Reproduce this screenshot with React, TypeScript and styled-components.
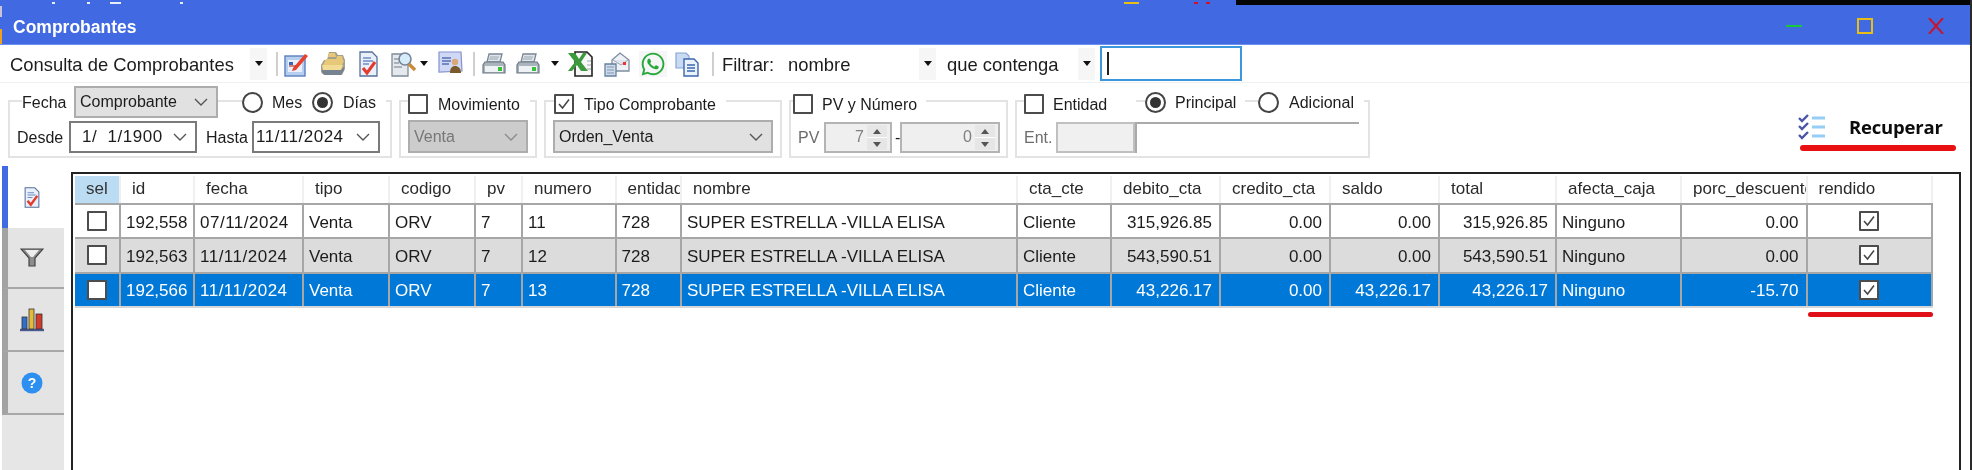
import React from 'react';
import styled, { createGlobalStyle } from 'styled-components';
import { FaWhatsapp } from 'react-icons/fa';

const GlobalStyle = createGlobalStyle`
  html, body { margin: 0; padding: 0; background: #fff; }
  body { width: 1972px; height: 470px; overflow: hidden; font-family: "Liberation Sans", Arial, sans-serif; color: #1c1c1c; }
  * { box-sizing: border-box; }
`;

const Window = styled.div`
  width: 1972px;
  height: 470px;
  display: flex;
  flex-direction: column;
  border-right: 2px solid #2a2a2a;
  background: #fff;
  overflow: hidden;
  filter: blur(0.5px);
`;

/* title bar */
const TitleBar = styled.header`
  position: relative;
  flex: none;
  height: 45px;
  margin-right: -2px;
  padding: 8px 28px 0 13px;
  display: flex;
  align-items: center;
  background: #4169e1;
  border-bottom: 1px solid #6e90ee;
`;
const Title = styled.span`
  flex: 1;
  margin-top: 2px;
  color: #fff;
  font-size: 17.5px;
  font-weight: 700;
`;
const WinButtons = styled.div`
  display: flex;
  align-items: center;
  gap: 55px;
`;
const BackdropStrip = styled.i`
  position: absolute;
  left: 1236px;
  right: 0;
  top: 0;
  height: 5px;
  background: #050505;
`;
const Speck = styled.i<{ $x: number; $w: number; $c: string }>`
  position: absolute;
  left: ${(p) => p.$x}px;
  top: 2px;
  width: ${(p) => p.$w}px;
  height: 2px;
  background: ${(p) => p.$c};
`;
const EdgeBits = styled.i`
  position: absolute;
  left: 0;
  top: 6px;
  width: 2px;
  height: 38px;
  background: linear-gradient(#c9c3da 0 30%, #4169e1 30% 60%, #f0a020 60% 100%);
`;

/* toolbar */
const Toolbar = styled.div`
  flex: none;
  height: 38px;
  display: flex;
  align-items: center;
  border-bottom: 1px solid #f0f0f0;
`;
const ToolText = styled.span<{ $ml: number; $w?: number }>`
  flex: none;
  margin-left: ${(p) => p.$ml}px;
  padding-top: 2px;
  width: ${(p) => (p.$w ? `${p.$w}px` : 'auto')};
  font-size: 18.4px;
  white-space: nowrap;
`;
const CaretBox = styled.span<{ $ml: number }>`
  flex: none;
  margin-left: ${(p) => p.$ml}px;
  width: 17px;
  height: 32px;
  background: #f6f6f6;
  display: flex;
  align-items: center;
  justify-content: center;
  &::after {
    content: '';
    border-left: 4px solid transparent;
    border-right: 4px solid transparent;
    border-top: 5px solid #111;
  }
`;
const SmallCaret = styled.span<{ $ml: number }>`
  flex: none;
  margin-left: ${(p) => p.$ml}px;
  border-left: 4px solid transparent;
  border-right: 4px solid transparent;
  border-top: 5px solid #111;
`;
const ToolSep = styled.span<{ $ml: number }>`
  flex: none;
  margin-left: ${(p) => p.$ml}px;
  width: 2px;
  height: 24px;
  background: #cfcfcf;
`;
const ToolIcon = styled.span<{ $ml: number; $w: number; $bg?: string }>`
  flex: none;
  margin-left: ${(p) => p.$ml}px;
  width: ${(p) => p.$w}px;
  height: 26px;
  display: flex;
  align-items: center;
  justify-content: center;
  background: ${(p) => p.$bg || 'transparent'};
  svg { display: block; width: 100%; height: 100%; }
`;
const SearchBox = styled.input`
  flex: none;
  margin-left: 5px;
  width: 142px;
  height: 35px;
  margin-top: -1px;
  border: 2px solid #3a96dd;
  background: #fff;
  outline: none;
  padding: 0 0 0 2px;
`;
const TextCaret = styled.span`
  position: relative;
  flex: none;
  width: 2px;
  height: 23px;
  margin-left: -135px;
  margin-right: 133px;
  background: #222;
`;

/* filter row */
const FilterRow = styled.section`
  flex: none;
  height: 83px;
  padding: 17px 14px 0 8px;
  display: flex;
  align-items: flex-start;
  gap: 7px;
`;
const Group = styled.div<{ $w: number }>`
  position: relative;
  flex: none;
  width: ${(p) => p.$w}px;
  height: 58px;
  padding: 0 7px 3px;
  display: flex;
  align-items: flex-end;
  border: 2px solid #e3e3e3;
`;
const Legend = styled.div<{ $ml: number }>`
  position: absolute;
  top: -16px;
  left: ${(p) => p.$ml}px;
  height: 32px;
  display: flex;
  align-items: center;
`;
const Lbl = styled.span<{ $w?: number; $ml?: number; $pad?: number; $dim?: boolean; $drop?: number }>`
  flex: none;
  width: ${(p) => (p.$w ? `${p.$w}px` : 'auto')};
  margin-left: ${(p) => p.$ml ?? 0}px;
  padding: 0 ${(p) => p.$pad ?? 0}px;
  font-size: 16px;
  line-height: 22px;
  background: #fff;
  color: ${(p) => (p.$dim ? '#6d6d6d' : '#1c1c1c')};
  white-space: nowrap;
  transform: translateY(${(p) => p.$drop ?? 1}px);
`;
const FieldLabel = styled(Lbl)`
  align-self: flex-end;
  line-height: 30px;
  background: transparent;
`;
const Check = styled.span<{ $ml?: number; $drop?: number }>`
  flex: none;
  margin-left: ${(p) => p.$ml ?? 0}px;
  width: 20px;
  height: 20px;
  display: block;
  border: 2px solid #4c4c4c;
  border-radius: 1px;
  background: #fff;
  transform: translateY(${(p) => p.$drop ?? 0}px);
  svg { display: block; width: 16px; height: 16px; }
`;
const Radio = styled.span<{ $ml?: number; $on?: boolean }>`
  flex: none;
  margin-left: ${(p) => p.$ml ?? 0}px;
  width: 21px;
  height: 21px;
  border: 2px solid #444;
  border-radius: 50%;
  background: #fff;
  display: flex;
  align-items: center;
  justify-content: center;
  &::after {
    content: '';
    width: 11px;
    height: 11px;
    border-radius: 50%;
    background: ${(p) => (p.$on ? '#333' : 'transparent')};
  }
`;
const Select = styled.div<{ $w: number; $h?: number; $ml?: number; $disabled?: boolean; $white?: boolean; $pl?: number }>`
  flex: none;
  margin-left: ${(p) => p.$ml ?? 0}px;
  width: ${(p) => p.$w}px;
  height: ${(p) => p.$h ?? 32}px;
  padding: 0 8px 0 ${(p) => p.$pl ?? 4}px;
  display: flex;
  align-items: center;
  justify-content: space-between;
  border: 2px solid ${(p) => (p.$white ? '#7a7a7a' : '#adadad')};
  background: ${(p) => (p.$white ? '#fff' : p.$disabled ? '#cccccc' : '#e1e1e1')};
  color: ${(p) => (p.$disabled ? '#777' : '#1c1c1c')};
  font-size: 16px;
  white-space: nowrap;
`;
const DateText = styled.span`
  font-size: 17px;
  letter-spacing: 0.5px;
`;
const Spin = styled.div<{ $w: number; $ml?: number }>`
  flex: none;
  margin-left: ${(p) => p.$ml ?? 0}px;
  width: ${(p) => p.$w}px;
  height: 31px;
  display: flex;
  border: 2px solid #b4b4b4;
  background: #efefef;
  color: #808080;
  font-size: 16px;
`;
const SpinValue = styled.span`
  flex: 1;
  text-align: right;
  padding-right: 3px;
  line-height: 25px;
`;
const SpinButtons = styled.span`
  flex: none;
  width: 20px;
  margin: 1px 3px 1px 0;
  display: flex;
  flex-direction: column;
  gap: 1px;
  background: #fff;
`;
const SpinButton = styled.span<{ $up?: boolean }>`
  flex: 1;
  background: #e6e6e6;
  display: flex;
  align-items: center;
  justify-content: center;
  &::after {
    content: '';
    border-left: 4px solid transparent;
    border-right: 4px solid transparent;
    ${(p) => (p.$up ? 'border-bottom: 5px solid #555;' : 'border-top: 5px solid #555;')}
  }
`;
const EntCode = styled.div`
  flex: none;
  margin-left: 4px;
  width: 79px;
  height: 31px;
  border: 2px solid #c0c0c0;
  background: #f0f0f0;
`;
const EntName = styled.div`
  flex: none;
  width: 224px;
  height: 31px;
  border-top: 2px solid #aaa;
  border-left: 2px solid #aaa;
  background: #fff;
`;

const Fetch = styled.div`
  flex: none;
  margin: 13px 0 0 auto;
  width: 156px;
  display: flex;
  flex-direction: column;
  gap: 4px;
`;
const FetchTop = styled.div`
  height: 28px;
  margin-left: -2px;
  display: flex;
  align-items: center;
  gap: 22px;
  svg { display: block; flex: none; }
`;
const FetchText = styled.span`
  margin-top: -2px;
  font-family: "Open Sans", "Liberation Sans", sans-serif;
  font-size: 18.5px;
  font-weight: 700;
  color: #0c0c0c;
  letter-spacing: -0.2px;
`;
const RedMark = styled.i`
  display: block;
  height: 6px;
  border-radius: 3px;
  background: #e81010;
`;

/* body */
const Body = styled.main`
  flex: 1;
  min-height: 0;
  display: flex;
`;
const Sidebar = styled.nav`
  flex: none;
  width: 62px;
  margin-left: 2px;
  display: flex;
  flex-direction: column;
`;
const Tab = styled.div<{ $active?: boolean; $h: number }>`
  flex: none;
  height: ${(p) => p.$h}px;
  display: flex;
  align-items: center;
  justify-content: center;
  padding-right: 9px;
  border-left: 6px solid ${(p) => (p.$active ? '#4169e1' : '#a3a3a3')};
  border-bottom: ${(p) => (p.$active ? 'none' : '2px solid #a8a8a8')};
  background: ${(p) => (p.$active ? '#fff' : '#e4e4e4')};
`;
const TabFiller = styled.div`
  flex: 1;
  background: #e6e6e6;
`;
const GridFrame = styled.div`
  position: relative;
  flex: none;
  width: 1890px;
  margin: 6px 0 0 7px;
  padding: 2px 26px 0 2px;
  border: 2px solid #222;
  border-bottom: none;
  background: #fff;
`;
const cols = '46px 74px 109px 86px 86px 47px 93.5px 65.5px 336px 94px 109px 110px 109px 117px 125px 125.5px 125.5px';
const HeadRow = styled.div`
  display: grid;
  grid-template-columns: ${cols};
  height: 29px;
  border-bottom: 2px solid #a6a6a6;
`;
const HeadCell = styled.div<{ $sel?: boolean }>`
  padding-left: 11px;
  font-size: 17px;
  line-height: 26px;
  overflow: hidden;
  white-space: nowrap;
  border-right: 2px solid #f0f0f0;
  background: ${(p) => (p.$sel ? '#bcdcf4' : '#fff')};
  color: ${(p) => (p.$sel ? '#333' : '#2a2a2a')};
`;
const Row = styled.div<{ $kind: 'plain' | 'alt' | 'selected' }>`
  display: grid;
  grid-template-columns: ${cols};
  height: 34.3px;
  border-bottom: 2px solid ${(p) => (p.$kind === 'selected' ? '#d6d6d6' : '#a6a6a6')};
  background: ${(p) => (p.$kind === 'plain' ? '#fff' : p.$kind === 'alt' ? '#dcdcdc' : '#0078d7')};
  color: ${(p) => (p.$kind === 'selected' ? '#fff' : '#1c1c1c')};
`;
const Cell = styled.div<{ $right?: boolean; $date?: boolean }>`
  padding: 3px 7px 0 5px;
  display: flex;
  align-items: center;
  justify-content: ${(p) => (p.$right ? 'flex-end' : 'flex-start')};
  font-size: 17px;
  letter-spacing: ${(p) => (p.$date ? '0.5px' : '0')};
  white-space: nowrap;
  overflow: hidden;
  border-right: 2px solid #a6a6a6;
`;
const CheckCell = styled(Cell)`
  justify-content: center;
  padding: 0;
`;
const RenderedMark = styled.i`
  position: absolute;
  left: 1735px;
  top: 138px;
  width: 125px;
  height: 5px;
  border-radius: 3px;
  background: #e01018;
`;

const Chevron = ({ color = '#555' }: { color?: string }) => (
  <svg width="14" height="8" viewBox="0 0 14 8" fill="none" stroke={color} strokeWidth="1.4">
    <path d="M1 1l6 6 6-6" />
  </svg>
);

const Tick = () => (
  <svg viewBox="0 0 16 16" fill="none" stroke="#444" strokeWidth="1.5">
    <path d="M3 8l3.5 4L13 3.5" />
  </svg>
);

const EditIcon = () => (
  <svg viewBox="0 0 24 26">
    <rect x="1" y="5" width="20" height="20" fill="#b7cfee" stroke="#5b7fc0" strokeWidth="1.4" />
    <rect x="4" y="9" width="14" height="12" fill="#e7f0fb" />
    <rect x="5" y="11" width="4" height="3" fill="#3a62b8" />
    <path d="M9 17L21 3l3 2L12 19l-4 1z" fill="#e8402c" />
    <path d="M5 15h7" stroke="#c0392b" strokeWidth="1.2" />
  </svg>
);
const FolderIcon = () => (
  <svg viewBox="0 0 26 26">
    <path d="M9 1h7l2 3h5l2 5v9l-3 6H4l-3-3v-7l3-5h3z" fill="#a5a08c" />
    <path d="M9 2h6l1 4H8zM17 5h5l1 4h-7zM6 8h16l2 2-2 4H3z" fill="#e7c878" />
    <path d="M2 14h21l-2 5H3z" fill="#f2dc94" />
    <path d="M2 19h19l3-3v3l-3 5H5l-3-2z" fill="#76828f" />
  </svg>
);
const CheckDocIcon = () => (
  <svg viewBox="0 0 19 26">
    <path d="M1 1h12l5 5v19H1z" fill="#eaf0fa" stroke="#56709c" strokeWidth="1.3" />
    <path d="M4 7h8M4 10h10M4 13h6" stroke="#6d8cc4" strokeWidth="1.3" />
    <path d="M4 17l4 5 8-11" fill="none" stroke="#e23a2c" strokeWidth="3" />
  </svg>
);
const SearchDocIcon = () => (
  <svg viewBox="0 0 26 26">
    <path d="M1 3h13l3 3v19H1z" fill="#e5e9ee" stroke="#7f8b97" strokeWidth="1.3" />
    <path d="M3 8h7M3 12h5M3 16h8" stroke="#707a88" strokeWidth="1.2" />
    <circle cx="14" cy="8" r="6" fill="#d6ecfa" stroke="#748496" strokeWidth="1.6" />
    <path d="M18 13l6 6" stroke="#c98a3a" strokeWidth="3.4" />
  </svg>
);
const PersonCardIcon = () => (
  <svg viewBox="0 0 25 26">
    <path d="M1 1h22l1 19-23 1z" fill="#cfd8f4" stroke="#8892cf" strokeWidth="1.2" />
    <path d="M4 7h9M4 10h9M4 13h7" stroke="#5b6fb5" strokeWidth="1.3" />
    <circle cx="17" cy="11" r="3.2" fill="#d9a878" />
    <path d="M12 22c0-5 2-7 5-7s6 2 6 7z" fill="#7a5a2a" />
  </svg>
);
const PrinterIcon = () => (
  <svg viewBox="0 0 24 26">
    <path d="M7 3h13l-2 8H5z" fill="#dfe5ea" stroke="#7a8794" strokeWidth="1.3" />
    <path d="M8 6h9M7 8h9" stroke="#9aa6b1" />
    <path d="M3 11h18l2 3v8H1v-8z" fill="#aab4bd" stroke="#6c7885" strokeWidth="1.2" />
    <rect x="3" y="15" width="18" height="6" fill="#eef2f5" />
    <rect x="16" y="16" width="4" height="4" fill="#35c436" />
  </svg>
);
const ExcelIcon = () => (
  <svg viewBox="0 0 26 26">
    <path d="M8 1h12l5 5v19H8z" fill="#f8f8f8" stroke="#222" strokeWidth="1.6" />
    <path d="M20 10h4M20 14h4M20 18h4" stroke="#9aa" />
    <path d="M1 2h7l4 6 4-6h4l-6 9 7 9h-7l-4-6-5 6H1l7-9z" fill="#3c9a3c" />
  </svg>
);
const MailIcon = () => (
  <svg viewBox="0 0 26 26">
    <path d="M8 9l8-7 9 7v11H8z" fill="#eef1f6" stroke="#7f8da0" strokeWidth="1.3" />
    <path d="M9 9l8 5 7-5" fill="#dfe5ee" stroke="#9aa7b8" />
    <rect x="19" y="11" width="3" height="3" fill="#e33" />
    <path d="M1 13h11v12H1z" fill="#cfdbea" stroke="#65809f" strokeWidth="1.3" />
    <path d="M3 16h7M3 19h7M3 22h7" stroke="#7f97b5" />
  </svg>
);
const CopyIcon = () => (
  <svg viewBox="0 0 24 26">
    <path d="M1 2h10l3 3v12H1z" fill="#c9dbf3" stroke="#86a4d4" strokeWidth="1.2" />
    <path d="M9 8h10l4 4v13H9z" fill="#eaf2fc" stroke="#3d66ad" strokeWidth="1.4" />
    <path d="M12 14h8M12 17h8M12 20h8" stroke="#3d66ad" strokeWidth="1.3" />
  </svg>
);
const ChecklistIcon = () => (
  <svg width="29" height="26" viewBox="0 0 29 26" fill="none">
    <path d="M1 4l3 3 6-6M1 12l3 3 6-6M1 21l3 3 6-6" stroke="#4a55a8" strokeWidth="2.4" />
    <path d="M14 4h13M14 13h13M14 22h13" stroke="#95cdf5" strokeWidth="3" />
  </svg>
);
const FunnelIcon = () => (
  <svg width="24" height="19" viewBox="0 0 24 19">
    <path d="M1 1h22l-8 9v8l-6 0v-8z" fill="#8d8d8d" stroke="#444" strokeWidth="1.2" />
    <path d="M5 2h14l-6 7h-2z" fill="#eee" />
  </svg>
);
const ChartIcon = () => (
  <svg width="26" height="25" viewBox="0 0 26 25">
    <path d="M1 23h24" stroke="#4a5a90" strokeWidth="2.4" />
    <rect x="3" y="10" width="5" height="12" fill="#3170c8" stroke="#333" strokeWidth=".8" />
    <rect x="10" y="2" width="5" height="20" fill="#e5b93a" stroke="#333" strokeWidth=".8" />
    <rect x="17" y="7" width="6" height="15" fill="#d23a2a" stroke="#333" strokeWidth=".8" />
  </svg>
);
const HelpIcon = () => (
  <svg width="22" height="22" viewBox="0 0 22 22">
    <circle cx="11" cy="11" r="10.5" fill="#2d8ff0" />
    <text x="11" y="16" textAnchor="middle" fontSize="14" fontWeight="700" fontFamily="Liberation Sans, sans-serif" fill="#fff">?</text>
  </svg>
);
const MinIcon = () => (
  <svg width="16" height="16" viewBox="0 0 16 16"><path d="M0 8h16" stroke="#17c83c" strokeWidth="2" /></svg>
);
const MaxIcon = () => (
  <svg width="16" height="16" viewBox="0 0 16 16" fill="none"><rect x="1" y="1" width="14" height="14" stroke="#e8bd14" strokeWidth="2" /></svg>
);
const CloseIcon = () => (
  <svg width="16" height="16" viewBox="0 0 16 16"><path d="M1 0l14 16M15 0L1 16" stroke="#c8142c" strokeWidth="2" /></svg>
);

const headers = ['sel', 'id', 'fecha', 'tipo', 'codigo', 'pv', 'numero', 'entidad', 'nombre', 'cta_cte', 'debito_cta', 'credito_cta', 'saldo', 'total', 'afecta_caja', 'porc_descuento', 'rendido'];

type Kind = 'plain' | 'alt' | 'selected';
const rows: { kind: Kind; id: string; fecha: string; numero: string; debito: string; saldo: string; total: string; porc: string }[] = [
  { kind: 'plain', id: '192,558', fecha: '07/11/2024', numero: '11', debito: '315,926.85', saldo: '0.00', total: '315,926.85', porc: '0.00' },
  { kind: 'alt', id: '192,563', fecha: '11/11/2024', numero: '12', debito: '543,590.51', saldo: '0.00', total: '543,590.51', porc: '0.00' },
  { kind: 'selected', id: '192,566', fecha: '11/11/2024', numero: '13', debito: '43,226.17', saldo: '43,226.17', total: '43,226.17', porc: '-15.70' },
];

export default function App() {
  return (
    <>
      <GlobalStyle />
      <Window>
        <TitleBar>
          <BackdropStrip />
          <EdgeBits />
          <Speck $x={52} $w={3} $c="#e8ecfa" />
          <Speck $x={87} $w={3} $c="#e8ecfa" />
          <Speck $x={110} $w={11} $c="#e8ecfa" />
          <Speck $x={180} $w={3} $c="#e8ecfa" />
          <Speck $x={1124} $w={15} $c="#e8bd14" />
          <Speck $x={1194} $w={4} $c="#c8142c" />
          <Speck $x={1206} $w={4} $c="#c8142c" />
          <Title>Comprobantes</Title>
          <WinButtons>
            <MinIcon />
            <MaxIcon />
            <CloseIcon />
          </WinButtons>
        </TitleBar>

        <Toolbar>
          <ToolText $ml={10} $w={240}>Consulta de Comprobantes</ToolText>
          <CaretBox $ml={0} />
          <ToolSep $ml={9} />
          <ToolIcon $ml={6} $w={24}><EditIcon /></ToolIcon>
          <ToolIcon $ml={12} $w={26}><FolderIcon /></ToolIcon>
          <ToolIcon $ml={13} $w={19}><CheckDocIcon /></ToolIcon>
          <ToolIcon $ml={13} $w={26}><SearchDocIcon /></ToolIcon>
          <SmallCaret $ml={3} />
          <ToolIcon $ml={10} $w={25}><PersonCardIcon /></ToolIcon>
          <ToolSep $ml={10} />
          <ToolIcon $ml={7} $w={24}><PrinterIcon /></ToolIcon>
          <ToolIcon $ml={10} $w={24}><PrinterIcon /></ToolIcon>
          <SmallCaret $ml={11} />
          <ToolIcon $ml={8} $w={26}><ExcelIcon /></ToolIcon>
          <ToolIcon $ml={11} $w={26}><MailIcon /></ToolIcon>
          <ToolIcon $ml={9} $w={28} $bg="#f6f6f6"><FaWhatsapp color="#27a83a" /></ToolIcon>
          <ToolIcon $ml={8} $w={24}><CopyIcon /></ToolIcon>
          <ToolSep $ml={13} />
          <ToolText $ml={8} $w={66}>Filtrar:</ToolText>
          <ToolText $ml={0} $w={131}>nombre</ToolText>
          <CaretBox $ml={0} />
          <ToolText $ml={11} $w={131}>que contenga</ToolText>
          <CaretBox $ml={0} />
          <SearchBox aria-label="filtro" />
          <TextCaret />
        </Toolbar>

        <FilterRow>
          <Group $w={384}>
            <Legend $ml={12}>
              <Lbl $w={52}>Fecha</Lbl>
              <Select $w={144}>Comprobante<Chevron /></Select>
              <Radio $ml={24} />
              <Lbl $w={49} $pad={9}>Mes</Lbl>
              <Radio $on />
              <Lbl $pad={10}>Días</Lbl>
            </Legend>
            <FieldLabel $w={48} $drop={0}>Desde</FieldLabel>
            <Select $w={128} $ml={4} $white $pl={11}><DateText>1/ &nbsp;1/1900</DateText><Chevron /></Select>
            <FieldLabel $w={43} $ml={9} $drop={0}>Hasta</FieldLabel>
            <Select $w={128} $ml={3} $white $pl={2}><DateText>11/11/2024</DateText><Chevron /></Select>
          </Group>

          <Group $w={138}>
            <Legend $ml={7}>
              <Check $drop={2} />
              <Lbl $pad={10} $drop={3}>Movimiento</Lbl>
            </Legend>
            <Select $w={120} $h={33} $disabled $pl={4}>Venta<Chevron color="#8c8c8c" /></Select>
          </Group>

          <Group $w={238}>
            <Legend $ml={8}>
              <Check $drop={2}><Tick /></Check>
              <Lbl $pad={10} $drop={3}>Tipo Comprobante</Lbl>
            </Legend>
            <Select $w={220} $h={33}>Orden_Venta<Chevron /></Select>
          </Group>

          <Group $w={219}>
            <Legend $ml={2}>
              <Check $drop={2} />
              <Lbl $pad={9} $drop={3}>PV y Número</Lbl>
            </Legend>
            <FieldLabel $w={26} $dim $drop={0}>PV</FieldLabel>
            <Spin $w={68}>
              <SpinValue>7</SpinValue>
              <SpinButtons><SpinButton $up /><SpinButton /></SpinButtons>
            </Spin>
            <FieldLabel $w={5} $ml={3} $drop={0}>-</FieldLabel>
            <Spin $w={100}>
              <SpinValue>0</SpinValue>
              <SpinButtons><SpinButton $up /><SpinButton /></SpinButtons>
            </Spin>
          </Group>

          <Group $w={355}>
            <Legend $ml={7}>
              <Check $drop={2} />
              <Lbl $w={92} $pad={9} $drop={3}>Entidad</Lbl>
              <Radio $ml={9} $on />
              <Lbl $w={79} $pad={9}>Principal</Lbl>
              <Radio $ml={13} />
              <Lbl $pad={10}>Adicional</Lbl>
            </Legend>
            <FieldLabel $w={28} $dim $drop={0}>Ent.</FieldLabel>
            <EntCode />
            <EntName />
          </Group>

          <Fetch>
            <FetchTop>
              <ChecklistIcon />
              <FetchText>Recuperar</FetchText>
            </FetchTop>
            <RedMark />
          </Fetch>
        </FilterRow>

        <Body>
          <Sidebar>
            <Tab $active $h={62}><svg width="18" height="21" viewBox="0 0 19 26"><path d="M1 1h12l5 5v19H1z" fill="#eaf0fa" stroke="#56709c" strokeWidth="1.3" /><path d="M4 7h8M4 10h10M4 13h6" stroke="#6d8cc4" strokeWidth="1.3" /><path d="M4 17l4 5 8-11" fill="none" stroke="#e23a2c" strokeWidth="3" /></svg></Tab>
            <Tab $h={61}><FunnelIcon /></Tab>
            <Tab $h={63}><ChartIcon /></Tab>
            <Tab $h={63}><HelpIcon /></Tab>
            <TabFiller />
          </Sidebar>

          <GridFrame>
            <HeadRow>
              {headers.map((h, i) => (
                <HeadCell key={h} $sel={i === 0}>{h}</HeadCell>
              ))}
            </HeadRow>
            {rows.map((r) => (
              <Row key={r.id} $kind={r.kind}>
                <CheckCell><Check /></CheckCell>
                <Cell>{r.id}</Cell>
                <Cell $date>{r.fecha}</Cell>
                <Cell>Venta</Cell>
                <Cell>ORV</Cell>
                <Cell>7</Cell>
                <Cell>{r.numero}</Cell>
                <Cell>728</Cell>
                <Cell>SUPER ESTRELLA -VILLA ELISA</Cell>
                <Cell>Cliente</Cell>
                <Cell $right>{r.debito}</Cell>
                <Cell $right>0.00</Cell>
                <Cell $right>{r.saldo}</Cell>
                <Cell $right>{r.total}</Cell>
                <Cell>Ninguno</Cell>
                <Cell $right>{r.porc}</Cell>
                <CheckCell><Check><Tick /></Check></CheckCell>
              </Row>
            ))}
            <RenderedMark />
          </GridFrame>
        </Body>
      </Window>
    </>
  );
}
